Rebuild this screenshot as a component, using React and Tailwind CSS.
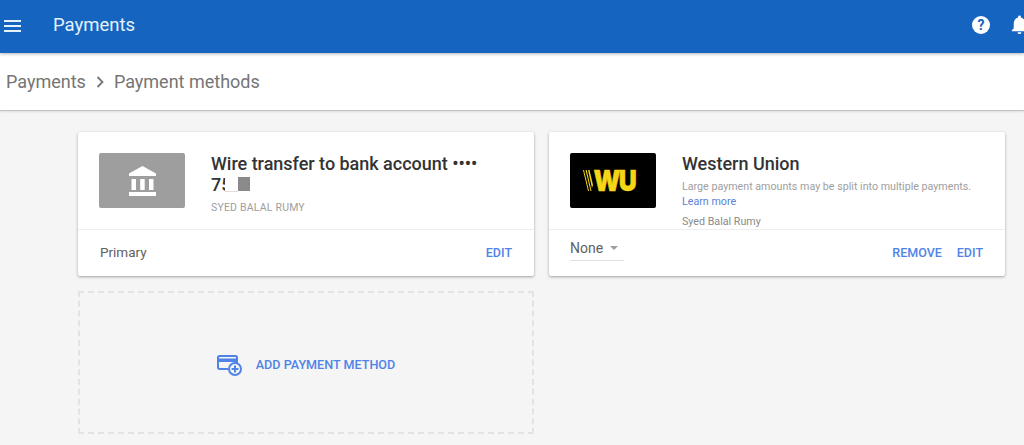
import React from "react";

function BankIcon() {
  return (
    <svg width="27" height="30" viewBox="0 0 27 30" fill="#fff">
      <path d="M13.500 0 L27 7.500 V10 H0 V7.500 Z" />
      <rect x="2.500" y="13" width="4.500" height="11" />
      <rect x="11.200" y="13" width="4.500" height="11" />
      <rect x="20" y="13" width="4.500" height="11" />
      <rect x="0" y="26" width="27" height="4" />
    </svg>
  );
}

function WuLogo() {
  return (
    <div className="w-[86px] h-[55px] shrink-0 bg-black rounded-[2px] flex items-center justify-center pr-[7px]">
      <svg width="12" height="21" viewBox="0 0 12 21" className="-mr-[3px]">
        <path d="M0 0 L1 0 L6 21 L5 21 Z M2.500 0 L3.700 0 L8.500 21 L7.500 21 Z M5 0 L6.500 0 L10 15 L9 18 Z" fill="#f6d416" />
      </svg>
      <span className="text-[#f6d416] font-black text-[29px] leading-none tracking-[-2px] font-['Inter',sans-serif] [-webkit-text-stroke:0.5px_#f6d416] [transform:scaleX(0.86)] -mx-[2px]">WU</span>
    </div>
  );
}

function AddCardIcon() {
  return (
    <svg width="25" height="21" viewBox="0 0 25 21" fill="none">
      <path d="M20 8 V2.500 a1.500 1.500 0 0 0 -1.500 -1.500 H2.500 A1.500 1.500 0 0 0 1 2.500 V12.500 a1.500 1.500 0 0 0 1.500 1.500 H11" stroke="#5083e8" strokeWidth="2" />
      <rect x="1" y="3.500" width="19" height="3.500" fill="#5083e8" />
      <circle cx="18" cy="14" r="6" fill="#f5f5f5" stroke="#5083e8" strokeWidth="2" />
      <path d="M18 10.500 V17.500 M14.500 14 H21.500" stroke="#5083e8" strokeWidth="2" />
    </svg>
  );
}

export default function App() {
  return (
    <div className="h-[445px] overflow-hidden bg-[#f5f5f5] font-['Roboto',sans-serif]">
      <div className="h-[53px] bg-[#1565c0] flex items-center relative z-10 shadow-[0_1px_3px_rgba(0,0,0,0.3)]">
        <svg width="18" height="14" viewBox="0 0 18 14" className="ml-[4px] -mt-[1px]" fill="#e3f2fd">
          <rect y="1" width="17" height="2" />
          <rect y="6" width="17" height="2" />
          <rect y="11" width="17" height="2" />
        </svg>
        <span className="ml-[31px] text-[18.500px] text-[#e3f2fd] -mt-[2px]">Payments</span>
        <div className="ml-auto flex items-center -mr-[7px] gap-[18px] -mt-[4px]">
          <div className="w-[18px] h-[18px] rounded-full bg-white text-[#1565c0] text-[14px] font-bold flex items-center justify-center leading-none">?</div>
          <svg width="23" height="23" viewBox="0 0 24 24" fill="#fff">
            <path d="M12 22c1.100 0 2-.9 2-2h-4c0 1.100.9 2 2 2zm6-6v-5c0-3.070-1.630-5.640-4.500-6.320V4c0-.83-.67-1.500-1.500-1.500s-1.500.67-1.500 1.500v.68C7.640 5.360 6 7.920 6 11v5l-2 2v1h16v-1l-2-2z" />
          </svg>
        </div>
      </div>

      <div className="h-[58px] bg-white border-b border-[#c4c4c4] shadow-[0_1px_2px_rgba(0,0,0,0.1)] flex items-center pl-[6px] text-[18px] text-[#757575]">
        <span>Payments</span>
        <svg width="10" height="12" viewBox="0 0 10 12" className="mx-[9px]" fill="none" stroke="#757575" strokeWidth="1.8">
          <path d="M2.500 1 L7.500 6 L2.500 11" />
        </svg>
        <span>Payment methods</span>
      </div>

      <div className="flex gap-[15px] pl-[78px] pt-[21px]">
        <div className="w-[456px] flex flex-col gap-[15px]">
          <div className="h-[144px] bg-white rounded-[2px] shadow-[0_1px_3px_rgba(0,0,0,0.35)] flex flex-col">
            <div className="h-[98px] flex border-b border-[#eeeeee] pl-[21px] pt-[21px]">
              <div className="w-[86px] h-[55px] shrink-0 bg-[#9e9e9e] rounded-[2px] flex items-center justify-center">
                <BankIcon />
              </div>
              <div className="ml-[26px]">
                <div className="w-[275px] text-[18px] leading-[21px] font-medium text-[#333333]">
                  <div className="tracking-[-0.02px]">Wire transfer to bank account ••••</div>
                  <div className="relative w-[40px] h-[21px]">
                    75
                    <span className="absolute left-[14px] top-[2px] w-[13px] h-[16px] bg-white border-b border-[#dddddd]"></span>
                    <span className="absolute left-[27px] top-[3px] w-[12px] h-[14px] bg-[#8a8a8a]"></span>
                  </div>
                </div>
                <div className="mt-[6px] text-[10.500px] leading-[14px] text-[#9e9e9e] tracking-[0.2px]">SYED BALAL RUMY</div>
              </div>
            </div>
            <div className="flex-1 flex items-center justify-between px-[22px]">
              <span className="text-[13.500px] text-[#616161] -mt-[2px]">Primary</span>
              <span className="text-[12.500px] font-medium text-[#5083e8]">EDIT</span>
            </div>
          </div>

          <div className="h-[143px] border-2 border-dashed border-[#e3e3e3] rounded-[2px] flex items-center justify-center gap-[14px] pt-[5px]">
            <AddCardIcon />
            <span className="text-[12.600px] font-medium text-[#5083e8]">ADD PAYMENT METHOD</span>
          </div>
        </div>

        <div className="w-[456px] h-[144px] bg-white rounded-[2px] shadow-[0_1px_3px_rgba(0,0,0,0.35)] flex flex-col">
          <div className="h-[98px] flex border-b border-[#eeeeee] pl-[21px] pt-[21px]">
            <WuLogo />
            <div className="ml-[26px]">
              <div className="text-[18px] leading-[21px] font-medium text-[#333333]">Western Union</div>
              <div className="mt-[5px] text-[10.700px] leading-[15px] text-[#9e9e9e]">Large payment amounts may be split into multiple payments.</div>
              <div className="text-[10.700px] leading-[15px] text-[#5c7fd6]">Learn more</div>
              <div className="mt-[5px] text-[10.700px] leading-[15px] text-[#8a8a8a]">Syed Balal Rumy</div>
            </div>
          </div>
          <div className="flex-1 flex items-center justify-between pl-[21px] pr-[22px]">
            <div className="w-[54px] h-[25px] mb-[9px] border-b border-[#e0e0e0] flex items-center gap-[7px] text-[14px] text-[#616161]">
              None
              <span className="border-x-[4px] border-x-transparent border-t-[4px] border-t-[#9e9e9e]"></span>
            </div>
            <div className="flex gap-[15px] text-[12.500px] font-medium text-[#5083e8]">
              <span>REMOVE</span>
              <span>EDIT</span>
            </div>
          </div>
        </div>
      </div>
    </div>
  );
}
